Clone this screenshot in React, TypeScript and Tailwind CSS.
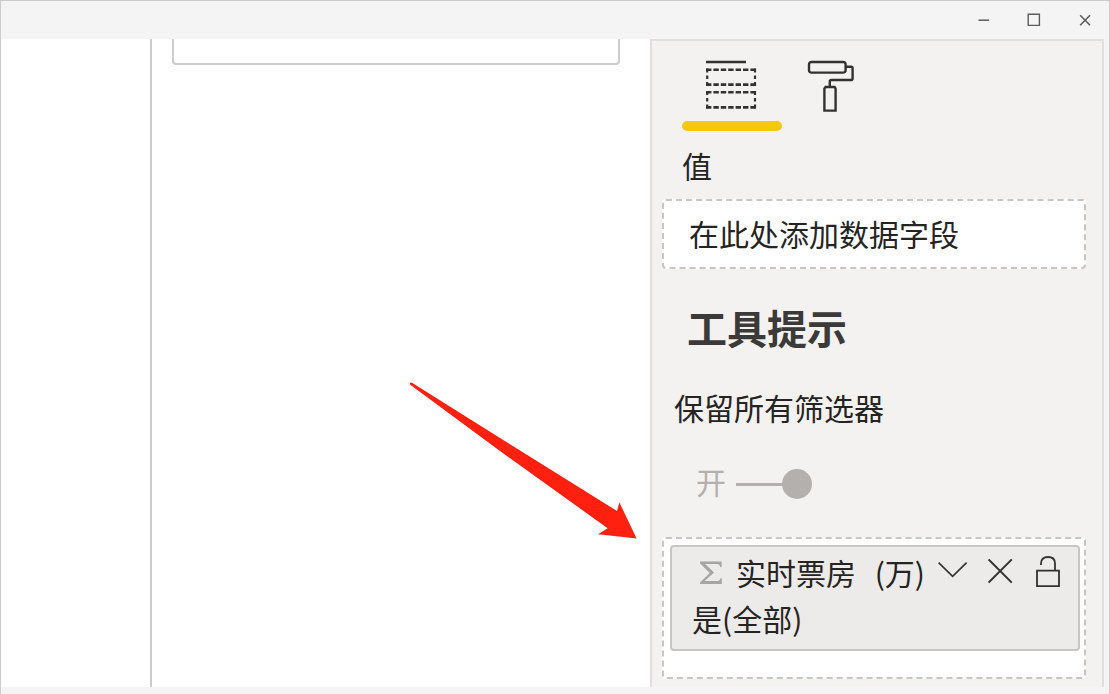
import React from "react";

function TitleBar() {
  const button = "flex h-full w-[50px] items-center justify-center text-[#5c5c5c]";
  return (
    <header className="flex h-[38px] shrink-0 justify-end bg-[#f4f4f4]">
      <button type="button" aria-label="最小化" className={button}>
        <svg width="14" height="14" viewBox="0 0 14 14" fill="none" stroke="currentColor" strokeWidth="1.5">
          <path d="M1.5 7.2H12" />
        </svg>
      </button>
      <button type="button" aria-label="最大化" className={button}>
        <svg width="14" height="14" viewBox="0 0 14 14" fill="none" stroke="currentColor" strokeWidth="1.4">
          <path d="M1.2 1.2H12.4V12.4H1.2Z" />
        </svg>
      </button>
      <button type="button" aria-label="关闭" className={button}>
        <svg width="14" height="14" viewBox="0 0 14 14" fill="none" stroke="currentColor" strokeWidth="1.6">
          <path d="M3.2 2.2L13 12.2M13 2.2L3.2 12.2" />
        </svg>
      </button>
    </header>
  );
}

function FieldsIcon() {
  return (
    <svg width="54" height="52" viewBox="0 0 54 52" fill="none" stroke="#333231" strokeWidth="2.2">
      <path d="M1 2H41" strokeWidth="2.4" />
      <path d="M1 9.8H51M1 24.6H51M1 32.2H51M1 47.4H51" strokeDasharray="5.4 2" strokeWidth="2.6" />
      <path d="M2.2 8.5V26M50 8.5V26M2.2 31V48.7M50 31V48.7" strokeDasharray="4 3 3.5 3" />
    </svg>
  );
}

function RollerIcon() {
  return (
    <svg width="48" height="52" viewBox="0 0 48 52" fill="none" stroke="#333231" strokeWidth="2.4">
      <rect x="2" y="2" width="36.6" height="10.6" rx="2.4" />
      <path d="M38.6 6.8H44.2Q45.6 6.8 45.6 8.2V18.4Q45.6 20 44 20H24.4Q22.8 20 22.8 21.6V27" />
      <path d="M18.6 27H27.6L28.6 28.6V50.6H17.4V28.6Z" />
    </svg>
  );
}

function SigmaIcon() {
  return (
    <svg width="24" height="24" viewBox="0 0 24 24" className="shrink-0" fill="#a6a5a4">
      <path d="M0 1.6H21.6V7H20.2Q19.8 4 17 4H5.2L14 12.4L4.6 21H17Q20 21 20.4 18.2H21.8V24H0V22.6L9.8 13L0 3.2Z" />
    </svg>
  );
}

function FieldCard() {
  return (
    <div className="rounded border-2 border-[#c8c6c4] bg-[#edebe9] pt-[2px] pr-4 pb-2 pl-5">
      <div className="flex h-[46px] items-center">
        <div className="flex min-w-0 flex-1 items-center gap-3 whitespace-nowrap pl-2">
          <SigmaIcon />
          <span>
            实时票房 <span className="ml-3">(万)</span>
          </span>
        </div>
        <div className="flex shrink-0 items-center gap-5 pb-[2px] text-[#333231]">
          <button type="button" aria-label="字段选项">
            <svg width="30" height="32" viewBox="0 0 30 32" fill="none" stroke="currentColor" strokeWidth="1.6">
              <path d="M0.6 7.6L14.6 21.4L28.6 7.6" />
            </svg>
          </button>
          <button type="button" aria-label="删除字段">
            <svg width="28" height="32" viewBox="0 0 28 32" fill="none" stroke="currentColor" strokeWidth="2">
              <path d="M0.6 4.4L23.8 27.6M23.8 4.4L0.6 27.6" />
            </svg>
          </button>
          <button type="button" aria-label="锁定筛选器">
            <svg width="26" height="32" viewBox="0 0 26 32" fill="none" stroke="currentColor" strokeWidth="1.8">
              <path d="M1 15.6H23V31.1H1Z" />
              <path d="M5 10V8.4Q5 2 12 2Q19 2 19 8.4V15.6" />
            </svg>
          </button>
        </div>
      </div>
      <p className="leading-[46px]">是(全部)</p>
    </div>
  );
}

function VisualizationPane() {
  return (
    <aside className="w-[454px] shrink-0 border-2 border-b-0 border-[#e1dfdd] bg-[#f3f2f1] pr-4 pb-[7px] pl-[10px] text-[30px] leading-[40px] text-[#252423]">
      <div role="tablist" aria-label="可视化" className="flex pl-5">
        <button type="button" role="tab" aria-selected="true" aria-label="字段" className="flex h-[90px] w-[100px] flex-col items-center justify-between pt-[19px]">
          <FieldsIcon />
          <span className="h-[10px] w-full rounded-full bg-[#f2c811]" />
        </button>
        <button type="button" role="tab" aria-selected="false" aria-label="格式" className="flex h-[90px] w-[98px] flex-col items-center pt-[19px]">
          <RollerIcon />
        </button>
      </div>

      <h3 className="mt-[14px] pl-5">值</h3>
      <div className="mt-[14px] rounded border-2 border-dashed border-[#c8c6c4] bg-white pt-3 pb-[14px] pl-[25px]">在此处添加数据字段</div>

      <h2 className="mt-[34px] pl-[25px] text-[40px] leading-[48px] font-bold text-[#3b3a39]">工具提示</h2>
      <p id="keep-filters" className="mt-9 pl-3">保留所有筛选器</p>
      <label className="mt-[34px] flex items-center gap-[10px] pl-[34px] text-[#b3b0ad]">
        开
        <input
          type="checkbox"
          role="switch"
          aria-describedby="keep-filters"
          defaultChecked
          disabled
          className="flex h-9 w-[76px] appearance-none items-center pt-[6px] before:h-[3px] before:flex-1 before:bg-[#b3b0ad] after:size-[30px] after:rounded-full after:bg-[#b3b0ad]"
        />
      </label>

      <div className="mt-9 rounded border-2 border-dashed border-[#c8c6c4] bg-white pt-[6px] pr-1 pb-[26px] pl-[6px]">
        <FieldCard />
      </div>
    </aside>
  );
}

function Arrow() {
  return (
    <svg aria-hidden="true" width="230" height="160" viewBox="0 0 230 160" className="absolute top-[342px] left-[256px]" fill="#ff2010">
      <path d="M2 2.2Q2.6 0.8 4.4 2L92 57L209 130L211.4 121.4L228.6 157.4L190 153.2L199.6 147.2L92 70L2.6 4Q1.6 3.2 2 2.2Z" />
    </svg>
  );
}

export default function App() {
  return (
    <div className="flex min-h-screen flex-col border border-b-0 border-[#cccccc] bg-[#f4f4f4] font-['Noto_Sans_CJK_SC',sans-serif]">
      <TitleBar />
      <main className="flex flex-1 pr-[5px]">
        <section className="w-[151px] shrink-0 border-r-2 border-[#cccccc] bg-white" />
        <section className="relative min-w-0 flex-1 bg-white pr-[30px] pl-5">
          <div className="h-[26px] rounded-b border-2 border-t-0 border-[#cccccc]" />
          <Arrow />
        </section>
        <VisualizationPane />
      </main>
      <footer className="h-[7px] shrink-0 bg-[#f4f4f4]" />
    </div>
  );
}
